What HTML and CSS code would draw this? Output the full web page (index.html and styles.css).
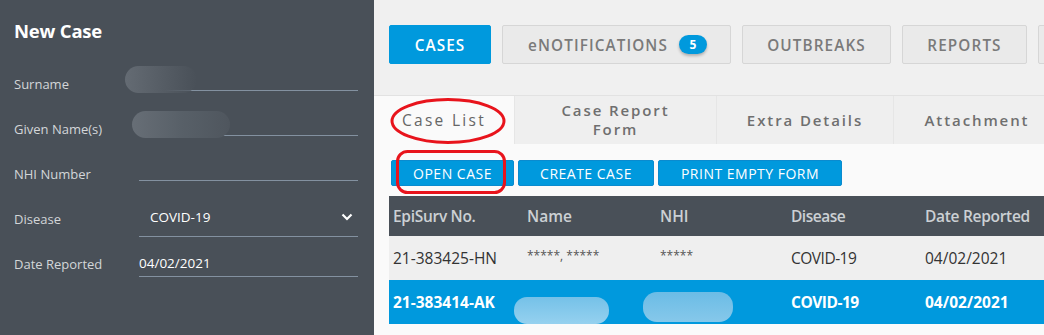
FILE: index.html
```html
<!DOCTYPE html>
<html>
<head>
<meta charset="utf-8">
<link rel="stylesheet" href="styles.css">
</head>
<body>
<aside class="sidebar">
  <h1 class="title">New Case</h1>
  <div class="frow">
    <label class="flabel">Surname</label>
    <div class="field"></div>
    <span class="blur blur-surname"></span>
  </div>
  <div class="frow">
    <label class="flabel">Given Name(s)</label>
    <div class="field"></div>
    <span class="blur blur-given"></span>
  </div>
  <div class="frow">
    <label class="flabel">NHI Number</label>
    <div class="field"></div>
  </div>
  <div class="frow">
    <label class="flabel">Disease</label>
    <div class="field field-select">
      <span class="select-value">COVID-19</span>
      <svg class="chev" width="12" height="8" viewBox="0 0 12 8"><path d="M1.5 1.5 L6 6 L10.5 1.5" fill="none" stroke="#ffffff" stroke-width="2.2"/></svg>
    </div>
  </div>
  <div class="frow">
    <label class="flabel">Date Reported</label>
    <div class="field field-date"><span class="date-value">04/02/2021</span></div>
  </div>
</aside>
<main class="content">
  <nav class="topnav">
    <button class="navbtn navbtn-active w-cases">CASES</button>
    <button class="navbtn w-enot">eNOTIFICATIONS <span class="badge">5</span></button>
    <button class="navbtn w-outb">OUTBREAKS</button>
    <button class="navbtn w-rep">REPORTS</button>
    <button class="navbtn w-more"></button>
  </nav>
  <section class="panel">
    <div class="tabs">
      <div class="tab tab-active w-t1">Case List</div>
      <div class="tab w-t2">Case Report<br>Form</div>
      <div class="tab w-t3">Extra Details</div>
      <div class="tab w-t4">Attachment</div>
    </div>
    <div class="actions">
      <button class="abtn w-a1">OPEN CASE</button>
      <button class="abtn w-a2">CREATE CASE</button>
      <button class="abtn w-a3">PRINT EMPTY FORM</button>
    </div>
    <div class="table">
      <div class="trow thead">
        <div class="cell c1">EpiSurv No.</div>
        <div class="cell c2">Name</div>
        <div class="cell c3">NHI</div>
        <div class="cell c4">Disease</div>
        <div class="cell c5">Date Reported</div>
      </div>
      <div class="trow tr-odd">
        <div class="cell c1">21-383425-HN</div>
        <div class="cell c2 stars">*****, *****</div>
        <div class="cell c3 stars">*****</div>
        <div class="cell c4">COVID-19</div>
        <div class="cell c5">04/02/2021</div>
      </div>
      <div class="trow tr-sel">
        <div class="cell c1">21-383414-AK</div>
        <div class="cell c2"></div>
        <div class="cell c3"></div>
        <div class="cell c4">COVID-19</div>
        <div class="cell c5">04/02/2021</div>
        <span class="blur blur-name"></span>
        <span class="blur blur-nhi"></span>
      </div>
    </div>
  </section>
  <svg class="annot annot-ellipse" width="118" height="48" viewBox="0 0 118 48"><ellipse cx="59" cy="24" rx="56" ry="21.5" fill="none" stroke="#e8141c" stroke-width="3"/></svg>
  <svg class="annot annot-rect" width="110" height="44" viewBox="0 0 110 44"><rect x="1.5" y="1.5" width="107" height="41" rx="10" ry="10" fill="none" stroke="#e8141c" stroke-width="3"/></svg>
</main>
</body>
</html>
```
FILE: styles.css
```css
* { box-sizing: border-box; }
html, body { margin: 0; padding: 0; }
body {
  width: 1044px;
  height: 335px;
  overflow: hidden;
  display: flex;
  font-family: "Open Sans", "Noto Sans", sans-serif;
  background: #f0f0f0;
}
.sidebar {
  width: 374px;
  flex: 0 0 374px;
  background: #495058;
  padding: 19px 16px 0 14px;
  position: relative;
}
.title {
  margin: 0 0 18px 0;
  font-size: 18.5px;
  line-height: 24px;
  font-weight: 700;
  color: #ffffff;
  letter-spacing: -0.2px;
}
.frow {
  display: grid;
  grid-template-columns: 125px 1fr;
  align-items: center;
  height: 45px;
  position: relative;
}
.flabel {
  font-size: 13px;
  color: #d3d6d9;
  line-height: 18px;
}
.field {
  height: 14px;
  border-bottom: 1px solid #8391a0;
}
.field-select {
  height: 36px;
  display: flex;
  align-items: center;
  justify-content: space-between;
  padding: 0 5px 3px 11px;
}
.select-value, .date-value {
  font-size: 13.5px;
  color: #ffffff;
}
.chev { display: block; }
.field-date {
  height: 26px;
  display: flex;
  align-items: center;
  padding-bottom: 1px;
}
.blur {
  position: absolute;
  border-radius: 14px;
  display: block;
}
.blur-surname {
  left: 111px; top: 5px; width: 72px; height: 27px;
  background: linear-gradient(90deg, #646b73 0%, #555c64 55%, rgba(73,80,88,0.6) 100%);
}
.blur-given {
  left: 118px; top: 5px; width: 98px; height: 27px;
  background: linear-gradient(90deg, #676e76 0%, #586068 50%, #4f565e 100%);
}
.content {
  flex: 1;
  position: relative;
  min-width: 0;
}
.topnav {
  height: 96px;
  display: flex;
  gap: 11px;
  padding: 25px 0 0 15px;
  border-bottom: 1px solid #e2e2e2;
  background: #f0f0f0;
  overflow: hidden;
}
.navbtn {
  flex: 0 0 auto;
  height: 39px;
  border: 1px solid #d6d6d6;
  background: #eaeaea;
  border-radius: 2px;
  font-family: "Open Sans", sans-serif;
  font-size: 15.3px;
  font-weight: 600;
  letter-spacing: 1.1px;
  color: #7a7a7a;
  display: flex;
  align-items: center;
  justify-content: center;
  gap: 11px;
  padding: 0;
}
.navbtn-active {
  background: #0099dd;
  border-color: #0099dd;
  color: #ffffff;
}
.w-cases { width: 102px; }
.w-enot { width: 229px; padding-left: 2px; }
.w-outb { width: 149px; }
.w-rep { width: 125px; }
.w-more { width: 40px; }
.badge {
  display: inline-flex;
  align-items: center;
  justify-content: center;
  width: 28px;
  height: 19px;
  border-radius: 10px;
  background: #0099dd;
  color: #ffffff;
  font-size: 12px;
  font-weight: 700;
  letter-spacing: 0;
  box-shadow: 0 2px 3px rgba(0,0,0,0.25);
}
.panel {
  background: #fafafa;
  height: 239px;
}
.tabs {
  display: flex;
  height: 48px;
  background: #efefef;
}
.tab {
  flex: 0 0 auto;
  display: flex;
  align-items: center;
  justify-content: center;
  text-align: center;
  font-size: 15px;
  line-height: 19px;
  font-weight: 600;
  letter-spacing: 1.9px;
  color: #6f6f6f;
  border-right: 1px solid #e6e6e6;
  white-space: nowrap;
}
.tab-active {
  background: #fafafa;
  color: #666666;
  font-weight: 500;
  font-size: 15.5px;
  letter-spacing: 2.3px;
}
.w-t1 { width: 141px; }
.w-t2 { width: 202px; }
.w-t3 { width: 177px; }
.w-t4 { width: 170px; border-right: none; padding-right: 4px; }
.actions {
  display: flex;
  gap: 4px;
  padding: 16px 0 0 17px;
}
.abtn {
  height: 26px;
  background: #0099dd;
  border: 1px solid #0a8bcf;
  border-radius: 2px;
  color: #ffffff;
  font-family: "Open Sans", sans-serif;
  font-size: 14px;
  letter-spacing: 0.5px;
  padding: 0;
  display: flex;
  align-items: center;
  justify-content: center;
}
.w-a1 { width: 123px; }
.w-a2 { width: 136px; }
.w-a3 { width: 184px; }
.table {
  margin: 10px 0 0 15px;
  width: 700px;
}
.trow {
  display: flex;
  height: 44px;
  align-items: center;
  position: relative;
}
.thead {
  height: 40px;
  background: #495058;
  color: #ccd0d4;
  font-weight: 600;
  font-size: 15.5px;
}
.tr-odd {
  background: #efefef;
  color: #333333;
  font-size: 15.5px;
}
.tr-sel {
  background: #0099dd;
  color: #ffffff;
  font-weight: 700;
  font-size: 15.5px;
}
.cell {
  padding-left: 4px;
  white-space: nowrap;
}
.c1 { width: 134px; }
.c2 { width: 133px; }
.c3 { width: 131px; }
.c4 { width: 134px; }
.c5 { width: 168px; }
.thead .c5, .thead .c1 { letter-spacing: -0.3px; }
.c4 { letter-spacing: -0.5px; }
.stars { font-size: 12px; color: #555; padding-bottom: 5px; letter-spacing: 0; }
.blur-name {
  left: 125px; top: 17px; width: 95px; height: 27px;
  border-radius: 13px;
  background: linear-gradient(180deg, #75c1e8 0%, #95d1ef 100%);
}
.blur-nhi {
  left: 254px; top: 12px; width: 90px; height: 30px;
  border-radius: 14px;
  background: linear-gradient(180deg, #6bbce6 0%, #86c8ea 100%);
}
.annot {
  position: absolute;
  display: block;
}
.annot-ellipse { left: 15px; top: 97px; }
.annot-rect { left: 22px; top: 150px; }
```
